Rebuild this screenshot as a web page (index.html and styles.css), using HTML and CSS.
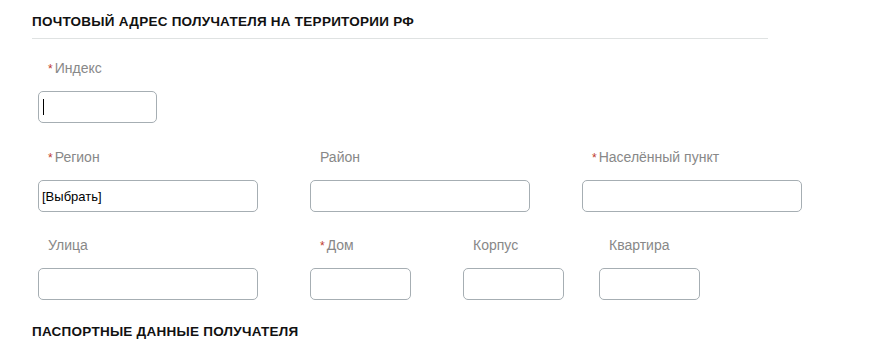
FILE: index.html
```html
<!DOCTYPE html>
<html lang="ru">
<head>
<meta charset="utf-8">
<title>Почтовый адрес</title>
<link rel="stylesheet" href="styles.css">
</head>
<body>
<div class="page">
  <h2 class="section-title first">ПОЧТОВЫЙ АДРЕС ПОЛУЧАТЕЛЯ НА ТЕРРИТОРИИ РФ</h2>
  <div class="fields">
    <div class="row">
      <div class="field w-index">
        <div class="label"><span class="req">*</span>Индекс</div>
        <div class="input"><span class="caret"></span></div>
      </div>
    </div>
    <div class="row">
      <div class="field w-wide">
        <div class="label"><span class="req">*</span>Регион</div>
        <div class="input"><span class="value">[Выбрать]</span></div>
      </div>
      <div class="field w-wide">
        <div class="label">Район</div>
        <div class="input"></div>
      </div>
      <div class="field w-wide">
        <div class="label"><span class="req">*</span>Населённый пункт</div>
        <div class="input"></div>
      </div>
    </div>
    <div class="row last">
      <div class="field w-wide">
        <div class="label">Улица</div>
        <div class="input"></div>
      </div>
      <div class="field w-small">
        <div class="label"><span class="req">*</span>Дом</div>
        <div class="input"></div>
      </div>
      <div class="field w-small">
        <div class="label">Корпус</div>
        <div class="input"></div>
      </div>
      <div class="field w-small tight">
        <div class="label">Квартира</div>
        <div class="input"></div>
      </div>
    </div>
  </div>
  <h2 class="section-title second">ПАСПОРТНЫЕ ДАННЫЕ ПОЛУЧАТЕЛЯ</h2>
</div>
</body>
</html>
```

FILE: styles.css
```css
html, body {
  margin: 0;
  padding: 0;
  background: #ffffff;
}
body {
  font-family: "Liberation Sans", Arial, sans-serif;
  width: 877px;
  height: 344px;
  overflow: hidden;
}
.page {
  padding: 14px 0 0 32px;
}
.section-title {
  margin: 0;
  font-size: 13.5px;
  line-height: 15px;
  font-weight: bold;
  color: #111111;
  letter-spacing: 0.25px;
}
.section-title.first {
  width: 736px;
  padding-bottom: 9px;
  border-bottom: 1px solid #dfe2e2;
}
.section-title.second {
  margin-top: 24px;
}
.fields {
  padding: 19px 0 0 6px;
  display: flex;
  flex-direction: column;
  gap: 24px;
}
.row {
  display: flex;
  gap: 52px;
}
.row.last {
  margin-top: -1px;
}
.field {
  display: flex;
  flex-direction: column;
  gap: 13px;
}
.field.tight {
  margin-left: -17px;
}
.w-index { width: 119px; }
.w-wide { width: 220px; }
.w-small { width: 101px; }
.label {
  height: 20px;
  font-size: 14px;
  line-height: 20px;
  color: #888888;
  padding-left: 10px;
  white-space: nowrap;
}
.req {
  color: #c0392b;
  font-size: 12px;
  margin-right: 2px;
}
.input {
  box-sizing: border-box;
  height: 32px;
  border: 1px solid #a6aeb3;
  border-radius: 5px;
  background: #ffffff;
  display: flex;
  align-items: center;
  padding-left: 3px;
}
.value {
  font-size: 13px;
  color: #000000;
}
.caret {
  display: block;
  width: 1px;
  height: 16px;
  margin-left: 1px;
  background: #000000;
}
```
